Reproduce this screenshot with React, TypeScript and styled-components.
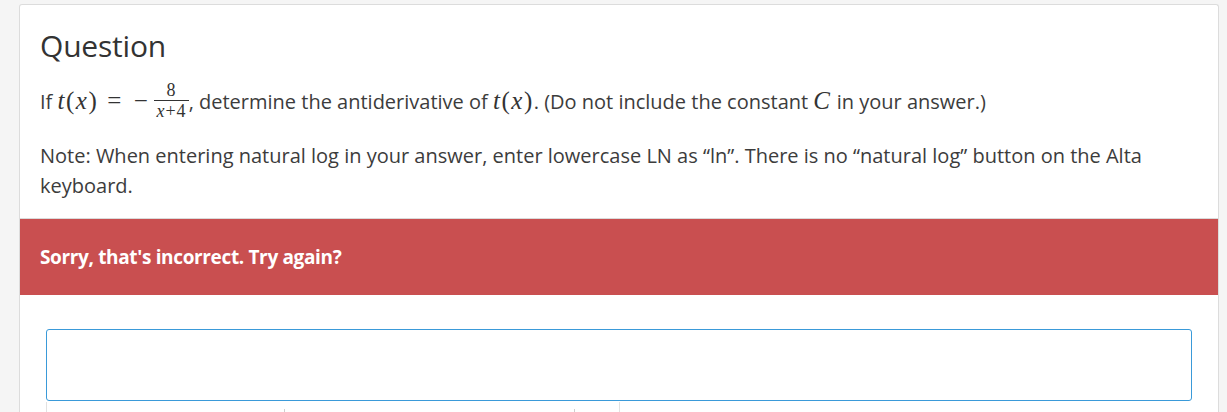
import styled, { createGlobalStyle } from "styled-components";

const GlobalStyle = createGlobalStyle`
  html, body {
    margin: 0;
    padding: 0;
    background-color: #f5f5f5;
    overflow: hidden;
  }
  body {
    font-family: "Open Sans", "Noto Sans", sans-serif;
    color: #333;
  }
`;

const Page = styled.div`
  padding: 4px 8px 0 19px;
`;

const Card = styled.div`
  background-color: #fff;
  border: 1px solid #dcdcdc;
  border-radius: 3px 3px 0 0;
  border-bottom: none;
`;

const QuestionBody = styled.div`
  padding: 22px 20px 17px 20px;
`;

const Title = styled.h2`
  margin: 0 0 19px 0;
  font-size: 30px;
  font-weight: 400;
  line-height: 38px;
  color: #333;
  letter-spacing: -0.2px;
`;

const Paragraph = styled.p<{ $spaced?: boolean }>`
  margin: 0;
  margin-top: ${({ $spaced }) => ($spaced ? "18px" : "0")};
  font-size: 20px;
  line-height: 30px;
  color: #3c3c3c;
`;

const Math = styled.span`
  font-family: "Liberation Serif", "DejaVu Serif", serif;
  font-size: 25px;
  letter-spacing: 1.5px;
  color: #333;
`;

const Var = styled.i`
  font-style: italic;
`;

const Op = styled.span`
  margin: 0 11px 0 9px;
`;

const Frac = styled.span`
  display: inline-flex;
  flex-direction: column;
  align-items: center;
  vertical-align: middle;
  font-size: 18px;
  line-height: 18px;
  letter-spacing: 1px;
  margin: 0 0 0 5px;
  position: relative;
  top: -3px;
`;

const Numer = styled.span`
  padding: 0 2px 1px 2px;
  align-self: stretch;
  text-align: center;
  border-bottom: 1px solid #333;
`;

const Denom = styled.span`
  padding: 1px 2px 0 2px;
`;

const Feedback = styled.div`
  background-color: #c94f50;
  border-top: 1px solid #dadada;
  padding: 25px 20px 25px 20px;
  font-size: 19px;
  font-weight: 700;
  line-height: 26px;
  color: #fff;
  letter-spacing: -0.35px;
`;

const AnswerArea = styled.div`
  padding: 34px 26px 0 26px;
`;

const AnswerInput = styled.div`
  height: 70px;
  border: 1px solid #3a9ad9;
  border-radius: 3px;
  background-color: #fff;
`;

const Keyboard = styled.div`
  width: 572px;
  height: 20px;
  margin-top: 1px;
  border-left: 1px solid #e2e2e2;
  border-right: 1px solid #e2e2e2;
  display: grid;
  grid-template-columns: 238px 290px 1fr;
`;

const KeyCell = styled.div<{ $divider?: boolean }>`
  border-right: ${({ $divider }) => ($divider ? "1px solid #cfcfcf" : "none")};
  margin-top: 7px;
`;

export default function App() {
  return (
    <>
      <GlobalStyle />
      <Page>
        <Card>
          <QuestionBody>
            <Title>Question</Title>
            <Paragraph>
              If{" "}
              <Math>
                <Var>t</Var>(<Var>x</Var>)<Op>=</Op>−
                <Frac>
                  <Numer>8</Numer>
                  <Denom>
                    <Var>x</Var>+4
                  </Denom>
                </Frac>
              </Math>
              , determine the antiderivative of{" "}
              <Math>
                <Var>t</Var>(<Var>x</Var>)
              </Math>
              . (Do not include the constant{" "}
              <Math>
                <Var>C</Var>
              </Math>{" "}
              in your answer.)
            </Paragraph>
            <Paragraph $spaced>
              Note: When entering natural log in your answer, enter lowercase
              LN as “ln”. There is no “natural log” button on the Alta
              keyboard.
            </Paragraph>
          </QuestionBody>
          <Feedback>Sorry, that's incorrect. Try again?</Feedback>
          <AnswerArea>
            <AnswerInput />
            <Keyboard>
              <KeyCell $divider />
              <KeyCell $divider />
              <KeyCell />
            </Keyboard>
          </AnswerArea>
        </Card>
      </Page>
    </>
  );
}
